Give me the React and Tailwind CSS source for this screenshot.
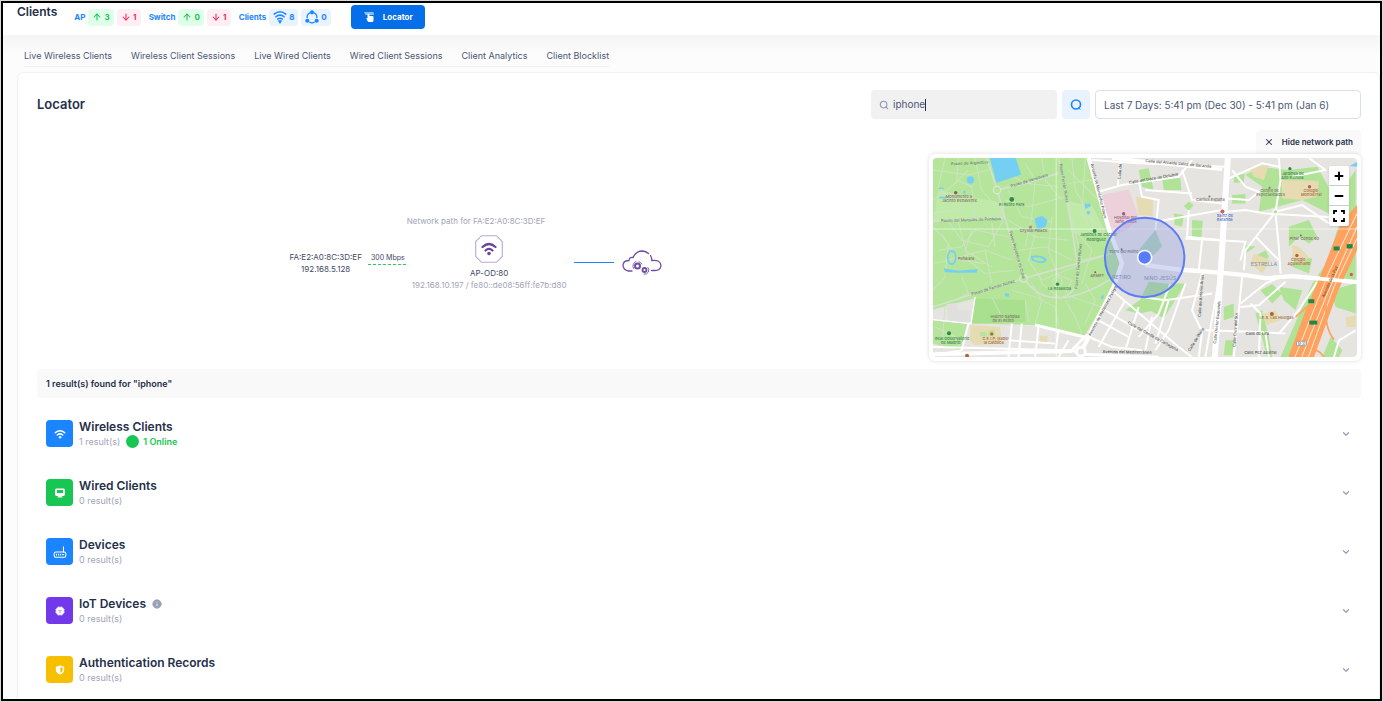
import React, { useState } from 'react';
import { ArrowUp, ArrowDown, Search, X, ChevronDown, Plus, Minus, Info } from 'lucide-react';

const TABS = [
    'Live Wireless Clients',
    'Wireless Client Sessions',
    'Live Wired Clients',
    'Wired Client Sessions',
    'Client Analytics',
    'Client Blocklist',
];

// park footpaths, drawn pale over the green
const FOOTPATHS = [
    'M60 24 L40 110 L110 175 L24 190', 'M24 60 L130 75 L190 60', 'M150 24 L170 120 L240 200',
    'M100 24 L95 90 L140 110 L150 205', 'M24 150 L80 110 L130 60', 'M24 230 L70 280 L60 380 L24 420',
    'M70 215 L110 270 L190 290 L235 210', 'M100 215 L130 330 L180 370 L270 360', 'M40 300 L110 290 L150 240 L250 260',
    'M30 340 L180 300 L260 330', 'M110 380 L130 430 L90 450', 'M180 300 L200 400', 'M230 60 L300 100 L400 110',
    'M250 120 L290 200 L380 215', 'M300 40 L330 90 L320 200 L300 290', 'M350 24 L360 90 L410 150', 'M240 150 L310 170 L420 140',
    'M250 210 L330 260 L430 270', 'M280 300 L360 290 L440 330', 'M330 250 L310 330 L350 390 L450 350', 'M380 200 L370 300 L400 380',
    'M430 60 L520 150', 'M440 24 L450 120 L520 240', 'M430 160 L500 170 L540 250', 'M440 210 L470 330 L560 310',
    'M450 240 L500 300 L470 400', 'M480 24 L470 190 L500 240', 'M430 100 L500 90', 'M320 400 L350 450 L330 520',
    'M200 440 L240 520', 'M260 420 L330 440 L390 470 L400 530', 'M420 450 L450 500 L470 550', 'M440 440 L530 470',
    'M480 400 L510 450 L480 520', 'M300 450 L310 515', 'M30 530 L90 560 L110 600', 'M60 470 L50 600', 'M340 370 L350 400 L400 440',
    'M390 370 L440 390 L420 430', 'M50 250 L100 330 L180 340', 'M140 240 L120 300 L200 350', 'M200 220 L210 290',
];

const CITY_STREETS = [
    'M500 30 L640 40 L900 50', 'M520 125 L590 105 L760 80 L800 30', 'M585 24 L578 105', 'M640 90 L650 140 L700 150 L690 240',
    'M660 120 L800 130', 'M770 60 L800 150 L890 160', 'M690 215 L890 180', 'M790 180 L785 260 L890 270', 'M780 265 L960 275 L945 330',
    'M830 270 L820 360', 'M900 185 L960 180 L1020 190 L1290 205', 'M920 60 L960 110 L1000 125 L970 150 L905 145', 'M900 90 L1010 40 L1060 50',
    'M1060 24 L1065 90 L1050 185 L960 300 L955 360', 'M1050 190 L1060 290 L1065 370', 'M990 260 L1060 330', 'M1050 185 L1130 165 L1210 220',
    'M1100 80 L1200 60 L1150 24', 'M880 390 L840 620', 'M950 380 L940 480 L925 620', 'M830 370 L800 480 L830 545 L820 620',
    'M650 440 L720 450 L860 430', 'M735 400 L700 490 L640 560', 'M730 450 L690 580', 'M780 400 L730 540 L690 600', 'M840 540 L1000 545 L1080 550',
    'M560 420 L620 470 L760 590 L800 620', 'M600 450 L520 590', 'M540 480 L640 540', 'M520 510 L610 560', 'M640 470 L600 600', 'M680 500 L660 600',
    'M945 460 L1020 400 L1065 380', 'M975 460 L1005 490 L1000 620', 'M945 470 L1000 465 L1080 395', 'M1060 550 L1120 480 L1175 395',
    'M1020 550 L1030 620', 'M1225 620 L1240 570 L1290 540', 'M480 555 L560 590 L650 600', 'M340 530 L330 620', 'M260 520 L250 620',
    'M250 570 L390 580', 'M130 520 L110 600 L24 615', 'M290 520 L280 620', 'M24 590 L420 600', 'M400 540 L390 610', 'M430 570 L400 620',
];

const GREEN_PATCHES = [
    'M640 60 L670 55 L685 120 L650 110Z', 'M710 80 L765 85 L768 120 L715 120Z', 'M775 168 L790 155 L805 165 L790 182Z',
    'M745 190 L775 195 L770 230 L748 225Z', 'M800 210 L832 212 L828 262 L800 262Z', 'M925 75 L958 72 L955 97 L925 98Z',
    'M920 135 L960 132 L960 160 L920 160Z', 'M960 75 L1000 50 L1090 60 L1175 50 L1230 150 L1210 190 L1130 150 L1000 185 L1010 110Z',
    'M670 395 L720 400 L780 400 L715 505 L640 460Z', 'M1090 230 L1150 210 L1175 260 L1150 280 L1120 260 L1090 290Z', 'M1110 320 L1160 325 L1150 370 L1100 350Z',
    'M985 320 L1020 300 L1030 320 L1000 350Z', 'M960 285 L990 290 L960 310Z', 'M1240 130 L1290 60 L1290 170 L1235 290 L1160 400 L1190 390 L1240 220Z',
    'M1260 330 L1290 300 L1290 390 L1255 385Z', 'M1160 400 L1200 390 L1090 620 L1065 620Z', 'M1215 420 L1290 400 L1290 490 L1230 470Z',
    'M1005 420 L1040 402 L1070 430 L1040 460Z', 'M1060 410 L1130 420 L1110 480 L1075 450Z', 'M900 570 L925 570 L920 615 L895 615Z',
    'M990 490 L1010 480 L1030 560 L1040 620 L1025 620Z', 'M895 470 L925 460 L925 500 L895 510Z', 'M1215 560 L1250 600 L1240 620 L1190 620Z',
    'M600 480 L640 490 L690 480 L690 460 L650 445Z',
];

// [label, x, y, rotation, colour]
const MAP_LABELS = [
    ['Paseo de Argentina', 78, 46, -3, '#6f7f72'],
    ['Monumento a', 62, 144, 0, '#8a6a72'],
    ['Jacinto Benavente', 50, 156, 0, '#8a6a72'],
    ['Paseo del Marqués de Pontejos', 48, 216, -2, '#6f7f72'],
    ['El Retiro Park', 222, 167, 0, '#3d8050'],
    ['Paseo de Venezuela', 258, 112, -17, '#6f7f72'],
    ['Crystal Palace', 284, 246, 0, '#8a6a72'],
    ['Paseo Fernán Núñez', 402, 42, 80, '#6f7f72'],
    ['Paseo República de Cuba', 252, 245, 74, '#6f7f72'],
    ['Paseo de Fernán Núñez', 140, 436, -17, '#6f7f72'],
    ['Paseo de Fernán Núñez', 456, 416, -84, '#6f7f72'],
    ['Peñalara', 98, 330, 0, '#8a6a72'],
    ['La Rosaleda', 368, 418, 0, '#3d8050'],
    ['Jardines de Cecilio', 464, 259, 0, '#3d8050'],
    ['Rodríguez', 484, 272, 0, '#3d8050'],
    ['AEMET', 495, 380, 0, '#8a6a72'],
    ['Huerto Sandías', 196, 502, 0, '#7c7467'],
    ['de El Retiro', 202, 514, 0, '#7c7467'],
    ['Real Observatorio', 30, 568, 0, '#3d8050'],
    ['de Madrid', 48, 580, 0, '#3d8050'],
    ['C.E.I.P. Isabel', 172, 568, 0, '#a06a40'],
    ['la Católica', 176, 580, 0, '#a06a40'],
    ['Hospital del', 566, 208, 0, '#96607a'],
    ['Niño Jesús', 570, 220, 0, '#96607a'],
    ['Torre del Retiro', 552, 310, 0, '#6a6a80'],
    ['Avenida de Menéndez Pelayo', 496, 42, 76, '#555555'],
    ['Avenida de Menéndez Pelayo', 496, 558, -62, '#555555'],
    ['Calle del Alcalde Sáinz de Baranda', 660, 36, 5, '#555555'],
    ['Calle del Doce de Octubre', 612, 102, -10, '#555555'],
    ['Calle de', 586, 88, -86, '#555555'],
    ['Cárites España', 812, 153, 0, '#7c7467'],
    ['Sainz de', 874, 200, 0, '#4b6cc0'],
    ['Baranda', 874, 212, 0, '#4b6cc0'],
    ['Jardines de', 1068, 74, 0, '#3d8050'],
    ['Alto Estrella', 1066, 86, 0, '#3d8050'],
    ['Centro de', 1004, 126, 0, '#7c7467'],
    ['Especialidades', 992, 138, 0, '#7c7467'],
    ['Colegio', 1134, 126, 0, '#a06a40'],
    ['Montserrat', 1126, 138, 0, '#a06a40'],
    ['Pinar Conde 90', 1092, 271, 0, '#7c7467'],
    ['Colegio', 1096, 332, 0, '#a06a40'],
    ['Agustiniano', 1086, 344, 0, '#a06a40'],
    ['I.E.S. Las Huelgas', 1002, 506, 0, '#a06a40'],
    ['Calle Doctor Esquerdo', 872, 580, -84, '#555555'],
    ['Calle de Antonio Arias', 826, 500, -86, '#555555'],
    ['Calle Cruz del Sur', 930, 590, -86, '#555555'],
    ['Calle de Lira', 960, 554, 0, '#555555'],
    ['Calle Pez Austral', 956, 612, 0, '#555555'],
    ['Calle del Conde de Cartagena', 606, 520, 29, '#555555'],
    ['Calle de Walia', 794, 604, -58, '#555555'],
    ['Avenida de la Paz', 1196, 442, -66, '#7a4a20'],
    ['Avenida del Mediterráneo', 532, 608, 1, '#444444'],
];

const ICON_DOTS = [
    [260, 148, '#2f8a4a', 7], [508, 243, '#2f8a4a', 6], [397, 402, '#2f8a4a', 5], [72, 549, '#2f8a4a', 6], [92, 128, '#8a5a62', 5],
    [316, 231, '#b08a8a', 5], [200, 551, '#b5643a', 5], [126, 616, '#b5643a', 6], [595, 191, '#96607a', 5], [1152, 110, '#b5643a', 5],
    [1114, 316, '#b5643a', 5], [1039, 491, '#a06a40', 6], [1093, 56, '#2f8a4a', 5], [891, 184, '#d85a5a', 6], [1277, 373, '#d85a5a', 5],
    [589, 297, '#6a6a80', 3], [510, 366, '#8a5a62', 3], [852, 139, '#7c7467', 3], [1032, 113, '#7c7467', 3], [1126, 256, '#7c7467', 3],
];

const StreetMap = () => (
    <svg viewBox="24 24 1270 597" className="block h-auto w-full rounded" role="img" aria-label="Client location map" fontFamily="Inter, sans-serif">
        <rect x="24" y="24" width="1270" height="597" fill="#e5e4e1" />
        {/* Retiro park */}
        <path d="M24 24H488L515 120L548 230L585 320L570 400L530 470L478 556L330 524L140 520L148 445L24 478Z" fill="#b4e59b" />
        <path d="M24 510L130 522L105 600L24 580Z" fill="#b4e59b" />
        <path d="M150 445L300 450L300 515L140 520Z" fill="#a9e08e" />
        <path d="M40 120L240 160L235 205L24 215ZM420 150L500 170L545 260L440 250Z" fill="#bfeaa7" />
        <g fill="none" stroke="#cfe3c2" strokeWidth="3">
            {FOOTPATHS.map((d) => <path key={d} d={d} />)}
        </g>
        <g fill="none" stroke="#d5e0cf" strokeWidth="5">
            <path d="M185 24L216 120L250 240L295 385L150 430L24 470" />
            <path d="M24 214L240 202" />
            <path d="M216 120L300 100L400 70" />
            <path d="M400 24L430 170L450 300L460 380Q450 430 410 442Q350 446 318 410L295 385L420 350L560 310" />
            <path d="M410 442Q470 440 560 385" />
        </g>
        <g fill="#b4e59b" stroke="#dde6d6" strokeWidth="4">
            <circle cx="216" cy="120" r="11" />
            <circle cx="295" cy="385" r="11" />
            <circle cx="397" cy="395" r="14" strokeWidth="2" />
        </g>
        <g fill="#74cff2">
            <path d="M194 24H272L288 74L214 98Z" />
            <circle cx="136" cy="90" r="11" />
            <path d="M328 205L350 198L367 210L362 230L336 240Z" />
            <path d="M56 355L100 362L157 357L155 368L100 368L60 366Z" />
            <path d="M42 112h14v5H42zM115 122h6v8h-6zM42 140h22v5H42zM478 162l8-2 2 14-8 2zM488 160l8 2-2 10-8-2zM486 182l10 3-4 8-8-3zM240 430h12v9h-12zM526 440l8-6 2 8-6 6z" />
            <path d="M1272 48L1294 36V50Z" />
        </g>
        <g fill="none" stroke="#74cff2" strokeWidth="5">
            <ellipse cx="80" cy="322" rx="12" ry="20" />
            <path d="M320 320Q345 315 362 328Q358 340 336 334Q320 332 320 320Z" />
        </g>
        {/* hospital and other blocks */}
        <path d="M530 135L610 118L640 200L610 235L560 260Z" fill="#ecd0da" />
        <path d="M64 462L96 458L100 480L135 480L135 515L70 512Z" fill="#dfe0de" />
        <g fill="#b0e396">
            {GREEN_PATCHES.map((d) => <path key={d} d={d} />)}
        </g>
        {/* schools */}
        <g fill="#e6dbb2">
            <path d="M136 525L225 530L230 580L150 584L134 572Z" />
            <path d="M342 556L368 558L366 580L345 576Z" />
            <path d="M632 140L683 145L682 198L640 195Z" />
            <path d="M1068 90L1180 92L1175 140L1130 150L1070 145Z" />
            <path d="M970 50L1030 45L1015 90L985 80Z" />
            <path d="M1100 285L1120 290L1150 320L1130 345L1100 325Z" />
            <path d="M985 310L1035 330L1010 370L975 340Z" />
            <path d="M1015 490L1050 480L1065 510L1020 525Z" />
            <path d="M1260 500L1290 495L1290 530L1262 530Z" />
        </g>
        <path d="M165 545h20v14h-20zM190 540h18v18h-18z" fill="#b4e59b" />
        <g fill="none" stroke="#ffffff" strokeWidth="6" strokeLinejoin="round">
            {CITY_STREETS.map((d) => <path key={d} d={d} />)}
        </g>
        <circle cx="1050" cy="185" r="7" fill="#b0e396" stroke="#fff" strokeWidth="4" />
        {/* avenues */}
        <g fill="none" stroke="#ffffff" strokeLinejoin="round">
            <path d="M490 24L520 130L552 240L590 340L565 410L470 600" strokeWidth="13" />
            <path d="M907 24L888 330L868 621" strokeWidth="18" />
            <path d="M560 24L760 45L890 58" strokeWidth="10" />
            <path d="M660 345L760 358L890 368L960 375L1020 384L1100 378L1294 396" strokeWidth="13" />
            <path d="M330 524L478 560L440 600L470 612L700 621" strokeWidth="9" />
            <path d="M24 612L440 602" strokeWidth="12" />
            <path d="M150 440L138 520L24 508" strokeWidth="4" />
        </g>
        <circle cx="467" cy="604" r="13" fill="#e5e4e1" stroke="#fff" strokeWidth="9" />
        {/* motorway */}
        <path d="M1248 215L1294 165V300L1238 420L1165 621H1088L1140 480L1185 375Z" fill="#ffa260" />
        <g fill="none" stroke="#ffe6d2" strokeWidth="3">
            <path d="M1294 190L1210 365L1108 621" />
            <path d="M1294 230L1205 430L1128 621" />
            <path d="M1294 265L1225 410L1148 621" />
        </g>
        <g fill="none" stroke="#ffa260" strokeWidth="5">
            <path d="M1202 460Q1195 530 1225 568" />
            <path d="M1160 608Q1175 590 1195 621" />
            <path d="M1110 500L1150 465" />
        </g>
        <path d="M1100 378L1294 396" fill="none" stroke="#fff" strokeWidth="11" />
        <g fill="#1f8a45">
            <rect x="1224" y="289" width="18" height="12" />
            <rect x="1263" y="282" width="18" height="13" />
            <rect x="1148" y="447" width="18" height="12" />
            <rect x="1151" y="511" width="24" height="12" />
        </g>
        <rect x="1113" y="573" width="30" height="13" rx="3" fill="#fff" stroke="#777" strokeWidth="2" />
        <text x="1117" y="583" fontSize="9" fill="#444">M-30</text>
        {/* tile seams */}
        <path d="M24 237H1294M393 24V621M1160 24" stroke="#ffffff" strokeOpacity=".55" strokeWidth="3" fill="none" />
        {ICON_DOTS.map(([x, y, color, r]) => <circle key={`${x}-${y}`} cx={x} cy={y} r={r} fill={color} />)}
        <g fontSize="12" fontWeight="500">
            {MAP_LABELS.map(([label, x, y, angle, color], i) => (
                <text key={i} x={x} y={y} fill={color} transform={`rotate(${angle} ${x} ${y})`}>{label}</text>
            ))}
        </g>
        <g fontSize="16" fill="#7d93a8">
            <text x="560" y="386">RETIRO</text>
            <text x="656" y="388">NIÑO JESÚS</text>
            <text x="976" y="347">ESTRELLA</text>
        </g>
        {/* client position */}
        <path d="M640 300L690 240L710 290L670 330Z" fill="#8fcf9f" fillOpacity=".6" />
        <circle cx="658" cy="322" r="119" fill="#7b8ae0" fillOpacity=".3" stroke="#5b7cf5" strokeWidth="6" />
        <circle cx="658" cy="322" r="21" fill="#5b7cfa" stroke="#f4f6ff" strokeWidth="5" />
    </svg>
);

const WedgeWifi = ({ className }) => (
    <svg viewBox="0 0 24 24" className={className} fill="none" stroke="currentColor" strokeWidth="2.6" strokeLinecap="round">
        <path d="M2 7Q12-1 22 7" />
        <path d="M5 11.5Q12 6 19 11.5" />
        <path d="M8 15.5Q12 12.5 16 15.5" />
        <path d="M10.5 19L12 21.5L13.5 19Z" fill="currentColor" />
    </svg>
);

const RingNodes = ({ className }) => (
    <svg viewBox="0 0 24 24" className={className} fill="none" stroke="currentColor" strokeWidth="2.2">
        <path d="M8.5 5A8.5 8.5 0 0 0 3.8 14" />
        <path d="M15.5 5A8.5 8.5 0 0 1 20.2 14" />
        <path d="M7.5 20.5A8.5 8.5 0 0 0 16.5 20.5" />
        <g fill="currentColor" stroke="none">
            <circle cx="12" cy="4" r="3.5" />
            <circle cx="4" cy="18.5" r="3.5" />
            <circle cx="20" cy="18.5" r="3.5" />
        </g>
    </svg>
);

const LocatorIcon = () => (
    <svg viewBox="0 0 24 24" className="size-3" fill="currentColor">
        <path d="M2 2H21L22 8H5Z" opacity=".55" />
        <path d="M9 8a2 2 0 0 1 4 0V10H19Q21 10 21 12V19Q21 22 18 22H12Q10 22 9 20L6.5 15 9 14Z" />
    </svg>
);

const WifiGlyph = ({ className }) => (
    <svg viewBox="0 0 24 24" className={className} fill="none" stroke="currentColor" strokeWidth="3" strokeLinecap="round">
        <path d="M2.5 9.5Q12 1.5 21.5 9.5" />
        <path d="M6.5 14Q12 9.5 17.5 14" />
        <circle cx="12" cy="18.5" r="1.8" fill="currentColor" strokeWidth="1.5" />
    </svg>
);

const MonitorGlyph = () => (
    <svg viewBox="0 0 24 24" className="size-3" fill="currentColor">
        <path fillRule="evenodd" d="M5 3H19Q22 3 22 6V14Q22 18 19 18H16L17 21H7L8 18H5Q2 18 2 14V6Q2 3 5 3ZM6 6V12H18V6Z" />
    </svg>
);

const RouterGlyph = () => (
    <svg viewBox="0 0 24 24" className="size-3.5" fill="none" stroke="currentColor" strokeWidth="1.8">
        <path d="M5 12H19Q22 12 22 15V18Q22 21 19 21H5Q2 21 2 18V15Q2 12 5 12Z" />
        <path d="M18 12V3" strokeLinecap="round" />
        <path d="M6 15V18M9.5 15V18M13 15V18" />
        <path d="M15.5 16.5H19" />
    </svg>
);

const ChipGlyph = () => (
    <svg viewBox="0 0 24 24" className="size-2.5" fill="currentColor">
        <rect x="3" y="3" width="18" height="18" rx="5" />
        <path d="M7 1H9V23H7ZM11 1H13V23H11ZM15 1H17V23H15ZM1 7H23V9H1ZM1 11H23V13H1ZM1 15H23V17H1Z" />
        <path d="M9 9H10.5V12H9ZM13.5 9H15V12H13.5ZM9 14H15V15H9Z" fill="#7239ea" />
    </svg>
);

const ShieldGlyph = () => (
    <svg viewBox="0 0 24 24" className="size-2.5" fill="currentColor">
        <path fillRule="evenodd" d="M12 1L22 4V12Q22 19 12 23Q2 19 2 12V4ZM13 5V19Q18.5 16.5 18.5 12V6.5Z" />
    </svg>
);

const CloudGears = () => (
    <svg viewBox="0 0 40 26" className="h-[26px] w-10 shrink-0" fill="none" stroke="#6f4fa3" strokeWidth="1.3" strokeLinecap="round">
        <path d="M10 21H6.5Q1 20 1 15Q1.5 10.5 7 10.5Q7 7 11 7.5" />
        <path d="M11 7.5Q14 1 20.5 1Q24 1.2 26.5 3.5" />
        <path d="M28.5 5.5Q30 8 29.8 10.5Q38.5 9.5 39 15.5Q38.5 20.5 33 20.5H29.5" />
        <circle cx="15.5" cy="16" r="2.5" strokeWidth="2" />
        <path d="M11.5 18.5A4.8 4.8 0 0 1 14 11.5M17 11.7A4.8 4.8 0 0 1 19.8 14" strokeWidth=".9" />
        <circle cx="22.5" cy="20" r="2" strokeWidth="1.8" />
        <path d="M26 17.5A4.2 4.2 0 0 1 22 24.2" strokeWidth=".9" />
    </svg>
);

const AccessPoint = () => (
    <svg viewBox="0 0 28 28" className="size-7" fill="none">
        <path d="M6.5.7H21.5L27.3 6.5V21.5L21.5 27.3H6.5L.7 21.5V6.5Z" stroke="#b9a9d3" strokeWidth="1.1" />
        <g stroke="#6a459e" strokeWidth="2.3" strokeLinecap="round">
            <path d="M7.5 12Q14 6 20.5 12" />
            <path d="M10.5 15.5Q14 12.3 17.5 15.5" />
        </g>
        <circle cx="14" cy="18.5" r="1.8" fill="#6a459e" />
    </svg>
);

const RESULTS = [
    { title: 'Wireless Clients', count: 1, online: 1, bg: 'bg-[#1b84ff]', icon: <WifiGlyph className="size-3" /> },
    { title: 'Wired Clients', count: 0, bg: 'bg-[#17c653]', icon: <MonitorGlyph /> },
    { title: 'Devices', count: 0, bg: 'bg-[#1b84ff]', icon: <RouterGlyph /> },
    { title: 'IoT Devices', count: 0, info: true, bg: 'bg-[#7239ea]', icon: <ChipGlyph /> },
    { title: 'Authentication Records', count: 0, bg: 'bg-[#f6c000]', icon: <ShieldGlyph /> },
];

const Badge = ({ tone, children }) => (
    <span className={`flex h-[17px] min-w-6 items-center justify-center gap-0.5 rounded px-1 ${tone}`}>
        {children}
    </span>
);

const UpDown = ({ up, down }) => (
    <div className="flex gap-[3px]">
        <Badge tone="bg-[#dfffea] text-[#17c653]"><ArrowUp className="size-2.5" strokeWidth={2.5} />{up}</Badge>
        <Badge tone="bg-[#ffeef3] text-[#f8285a]"><ArrowDown className="size-2.5" strokeWidth={2.5} />{down}</Badge>
    </div>
);

const Header = () => (
    <header className="flex h-8 items-center bg-white pb-1 pl-3.5">
        <h1 className="mr-[17px] self-start text-xs font-semibold leading-[18px] text-[#252f4a]">Clients</h1>
        <div className="flex items-center gap-2 text-[8px] font-bold text-[#1b84ff]">
            <div className="flex items-center gap-[3px]">AP <UpDown up={3} down={1} /></div>
            <div className="flex items-center gap-[3px]">Switch <UpDown up={0} down={1} /></div>
            <div className="flex items-center gap-[3px]">
                Clients
                <Badge tone="bg-[#e9f3ff] text-[#1b84ff]"><WedgeWifi className="size-3.5" />8</Badge>
                <Badge tone="bg-[#e9f3ff] text-[#1b84ff]"><RingNodes className="size-3.5" />0</Badge>
            </div>
        </div>
        <button type="button" className="ml-5 flex h-6 items-center gap-2 rounded bg-[#056ee9] px-3 text-[8px] font-bold text-white">
            <LocatorIcon />
            Locator
        </button>
    </header>
);

const NetworkPath = () => (
    <div className="flex flex-1 flex-col items-center justify-center pt-3.5 text-[8px] leading-3">
        <p className="mb-2 text-[#a1a5b7]">Network path for FA:E2:A0:8C:3D:EF</p>
        <div className="flex items-center">
            <p className="text-center text-[#3f4865]">FA:E2:A0:8C:3D:EF<br />192.168.5.128</p>
            <div className="ml-1.5 w-10 pb-2">
                <p className="whitespace-nowrap text-center text-[7px] leading-3 text-[#3f4865]">300 Mbps</p>
                <div className="h-px bg-[repeating-linear-gradient(90deg,#2fc866_0_3px,transparent_3px_5px)]" />
            </div>
            <div className="ml-1 mr-2 flex flex-col items-center">
                <AccessPoint />
                <p className="mt-1 text-[#3f4865]">AP-OD:80</p>
                <p className="text-[#a1a5b7]">192.168.10.197 / fe80::de08:56ff:fe7b:d80</p>
            </div>
            <div className="mr-2 h-px w-10 bg-[#1b84ff]" />
            <CloudGears />
        </div>
    </div>
);

const MapPanel = () => (
    <div className="relative rounded-md bg-white p-1 shadow-[0_0_4px_rgba(0,0,0,0.15)]">
        <StreetMap />
        <div className="absolute right-3 top-3 flex w-5 flex-col divide-y divide-[#cccccc] rounded-xs bg-white text-black shadow">
            <button type="button" aria-label="Zoom in" className="flex h-5 items-center justify-center"><Plus className="size-3" strokeWidth={4} /></button>
            <button type="button" aria-label="Zoom out" className="flex h-5 items-center justify-center"><Minus className="size-3" strokeWidth={4} /></button>
            <button type="button" aria-label="Full screen" className="flex h-5 items-center justify-center">
                <svg viewBox="0 0 12 12" className="size-3" fill="none" stroke="currentColor" strokeWidth="1.8">
                    <path d="M1 4V1H4M8 1H11V4M11 8V11H8M4 11H1V8" />
                </svg>
            </button>
        </div>
    </div>
);

const ResultRow = ({ item }) => (
    <li>
        <button type="button" className="flex h-[59px] w-full items-center pl-[9px] pr-2.5 text-left">
            <span className={`flex size-[27px] items-center justify-center rounded text-white ${item.bg}`}>{item.icon}</span>
            <span className="ml-1.5 flex-1">
                <span className="flex items-center gap-1.5 text-xs font-semibold leading-4 text-[#252f4a]">
                    {item.title}
                    {item.info && <Info className="size-2.5 fill-[#99a1b7] text-[#99a1b7] [&>path]:stroke-white" strokeWidth={2} />}
                </span>
                <span className="flex h-[14px] items-center text-[9px] text-[#a1a5b7]">
                    {item.count} result(s)
                    {item.online && (
                        <span className="ml-1.5 flex items-center gap-1 font-semibold text-[#17c653]">
                            <span className="size-[13px] rounded-full bg-[#17c653]" />
                            {item.online} Online
                        </span>
                    )}
                </span>
            </span>
            <ChevronDown className="size-2.5 text-[#99a1b7]" strokeWidth={3} />
        </button>
    </li>
);

const App = () => {
    const [query, setQuery] = useState('iphone');

    return (
        <div className="flex min-h-screen bg-[#d9d9d9] p-px font-[Inter,sans-serif]">
            <div className="flex flex-1 flex-col border-2 border-black bg-[#fcfcfc]">
                <Header />
                <div className="flex flex-1 flex-col bg-linear-to-b from-[#f5f5f5] to-[#fcfcfc] to-[20px] pl-3.5">
                    <nav className="ml-[7px] mb-[5px] flex h-8 w-fit items-center gap-[19px] border-b border-[#f1f1f4] pt-2.5 text-[9px] text-[#4b5675]">
                        {TABS.map((tab) => (
                            <a key={tab} href="#" className="whitespace-nowrap">{tab}</a>
                        ))}
                    </nav>
                    <main className="flex-1 rounded-t-md border border-b-0 border-[#f1f1f4] bg-white pl-[19px] pr-[18px] pt-[17px]">
                        <div className="flex items-center justify-between">
                            <h2 className="text-[13px] font-semibold text-[#252f4a]">Locator</h2>
                            <div className="flex gap-[5px]">
                                <label className="relative flex h-[29px] w-[186px] items-center gap-1 rounded bg-[#f1f1f2] px-2">
                                    <Search className="size-2.5 text-[#8a94ad]" strokeWidth={2.5} />
                                    <input
                                        aria-label="Search"
                                        value={query}
                                        onChange={(e) => setQuery(e.target.value)}
                                        className="min-w-0 flex-1 bg-transparent text-[10px] text-[#4b5675] outline-none"
                                    />
                                    <span className="absolute left-[54px] h-3 w-px bg-[#252f4a]" />
                                </label>
                                <button type="button" aria-label="Refresh" className="flex h-[29px] w-7 items-center justify-center rounded bg-[#e9f3ff] text-[#1b84ff]">
                                    <svg viewBox="0 0 12 12" className="size-3" fill="none" stroke="currentColor" strokeWidth="1.6">
                                        <circle cx="6" cy="5.500" r="4.500" />
                                        <path d="M8 8.500L10.500 10.500" strokeWidth="1" />
                                    </svg>
                                </button>
                                <input
                                    aria-label="Date range"
                                    readOnly
                                    value="Last 7 Days: 5:41 pm (Dec 30) - 5:41 pm (Jan 6)"
                                    className="h-[29px] w-[266px] rounded border border-[#dbdfe9] bg-white px-2 text-[10px] text-[#4b5675] outline-none"
                                />
                            </div>
                        </div>
                        <div className="mt-[11px] flex">
                            <NetworkPath />
                            <div className="ml-3.5 flex w-[432px] flex-col">
                                <button type="button" className="flex h-6 items-center gap-2 self-end rounded-t bg-[#f9f9f9] px-2 text-[8px] font-semibold text-[#252f4a]">
                                    <X className="size-2.5" strokeWidth={2.5} />
                                    Hide network path
                                </button>
                                <MapPanel />
                            </div>
                        </div>
                        <p className="mt-2 flex h-[29px] items-center rounded bg-[#f9f9f9] px-[9px] text-[9px] font-semibold text-[#252f4a]">
                            1 result(s) found for "{query}"
                        </p>
                        <ul className="mt-1.5">
                            {RESULTS.map((item) => <ResultRow key={item.title} item={item} />)}
                        </ul>
                    </main>
                </div>
            </div>
        </div>
    );
};

export default App;
